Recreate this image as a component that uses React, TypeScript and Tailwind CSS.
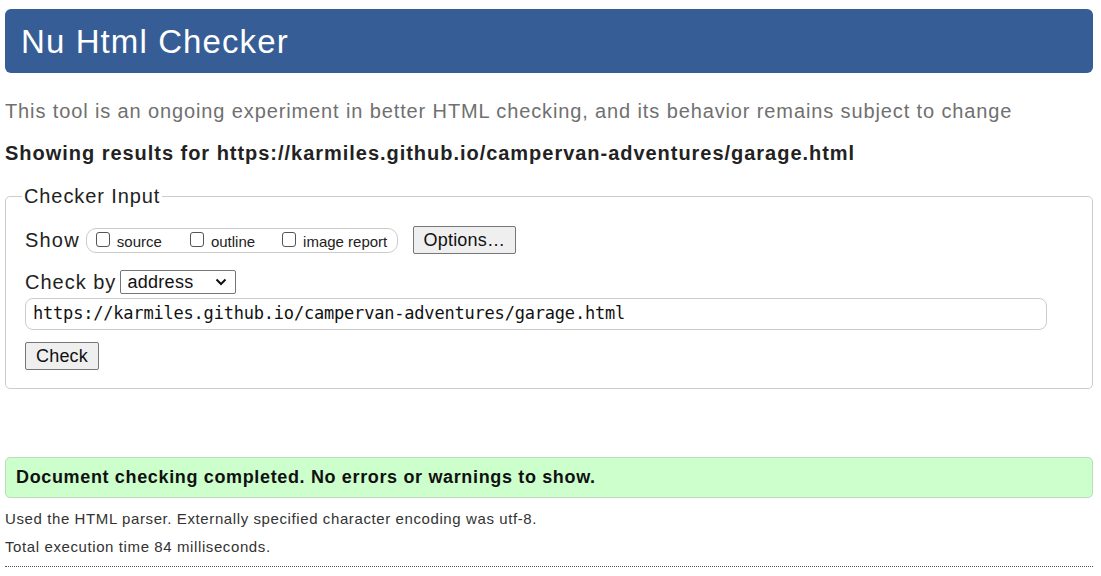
export default function App() {
  return (
    <div className="bg-white px-[5px] pt-[9px] text-[#222] font-['Liberation_Sans',Arial,sans-serif] w-[1098px]">
      <h1 className="bg-[#365d96] text-white rounded-[6px] h-[64px] flex items-center pl-[16px] text-[33px] tracking-[1.1px] leading-none">
        Nu Html Checker
      </h1>

      <p className="text-[#707070] text-[20px] tracking-[0.88px] leading-none mt-[28px]">
        This tool is an ongoing experiment in better HTML checking, and its behavior remains subject to change
      </p>
      <p className="font-bold text-[20px] tracking-[0.97px] leading-none mt-[22px] text-[#222]">
        Showing results for https://karmiles.github.io/campervan-adventures/garage.html
      </p>

      <fieldset className="border border-[#ccc] rounded-[5px] mt-[23px] h-[203px] px-[19px] pb-[16px]">
        <legend className="text-[20px] tracking-[0.9px] leading-none px-[2px] ml-[-3px]">Checker Input</legend>

        <div className="flex items-center mt-[20px]">
          <span className="text-[20px] tracking-[1.2px] leading-none">Show</span>
          <div className="ml-[6px] h-[25px] w-[312px] border border-[#ccc] rounded-[10px] flex items-center pl-[9px] text-[15px] leading-none">
            <label className="flex items-center">
              <span className="w-[14px] h-[15px] border border-[#555] rounded-[3px] bg-white mb-[2px]"></span>
              <span className="ml-[7px] mt-[3px]">source</span>
            </label>
            <label className="flex items-center ml-[28px]">
              <span className="w-[14px] h-[15px] border border-[#555] rounded-[3px] bg-white mb-[2px]"></span>
              <span className="ml-[7px] mt-[3px]">outline</span>
            </label>
            <label className="flex items-center ml-[27px]">
              <span className="w-[14px] h-[15px] border border-[#555] rounded-[3px] bg-white mb-[2px]"></span>
              <span className="ml-[7px] mt-[3px]">image report</span>
            </label>
          </div>
          <button className="ml-[15px] h-[28px] w-[103px] border border-[#767676] rounded-[2px] bg-[#efefef] text-[18px] tracking-[0.2px] leading-none text-[#111]">
            Options…
          </button>
        </div>

        <div className="flex items-center mt-[16px]">
          <span className="text-[20px] tracking-[1px] leading-none">Check by</span>
          <div className="ml-[4px] h-[24px] w-[116px] border border-[#767676] rounded-[2px] flex items-center justify-between pl-[6px] pr-[8px] text-[18px] tracking-[0.3px] leading-none text-[#111]">
            <span>address</span>
            <svg width="12" height="8" viewBox="0 0 12 8" fill="none" stroke="#111" strokeWidth="2">
              <path d="M1.5 1.5 L6 6 L10.5 1.5" />
            </svg>
          </div>
        </div>

        <div className="mt-[4px] h-[32px] w-[1022px] border border-[#ccc] rounded-[8px] flex items-center pl-[7px] font-['DejaVu_Sans_Mono',monospace] text-[17px] tracking-[-0.2px] text-[#111]">
          https://karmiles.github.io/campervan-adventures/garage.html
        </div>

        <button className="mt-[12px] h-[28px] w-[74px] border border-[#767676] rounded-[2px] bg-[#efefef] text-[18px] tracking-[0.2px] leading-none text-[#111]">
          Check
        </button>
      </fieldset>

      <div className="mt-[68px] h-[41px] bg-[#ccffcc] border border-[#bcdcbc] rounded-[5px] flex items-center pl-[10px] font-bold text-[18px] tracking-[0.65px] text-[#111]">
        Document checking completed. No errors or warnings to show.
      </div>

      <p className="text-[15px] tracking-[0.6px] leading-none mt-[13px] text-[#333]">
        Used the HTML parser. Externally specified character encoding was utf-8.
      </p>
      <p className="text-[15px] tracking-[0.6px] leading-none mt-[13px] text-[#333]">
        Total execution time 84 milliseconds.
      </p>
      <div className="mt-[12px] border-b border-dotted border-[#555] h-0"></div>
      <div className="h-[20px]"></div>
    </div>
  );
}
